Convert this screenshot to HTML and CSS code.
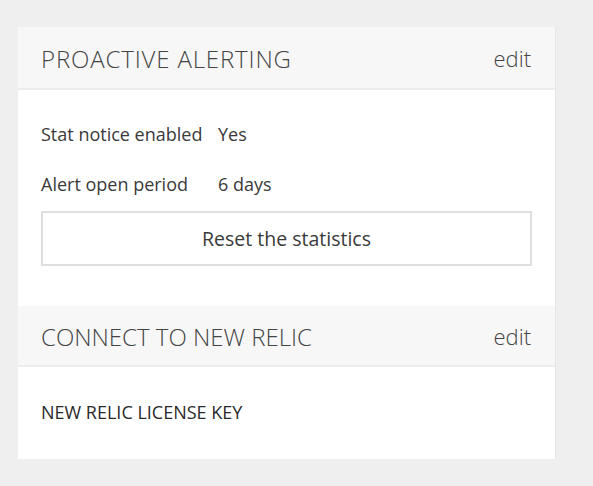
FILE: index.html
```html
<!DOCTYPE html>
<html>
<head>
<meta charset="utf-8">
<link rel="stylesheet" href="styles.css">
</head>
<body>
<div class="page">
  <div class="card">
    <section class="panel">
      <header class="panel-head">
        <h2 class="panel-title panel-title-wide">PROACTIVE ALERTING</h2>
        <a class="panel-edit">edit</a>
      </header>
      <div class="panel-body panel-body-first">
        <div class="field-row">
          <span class="field-label">Stat notice enabled</span>
          <span class="field-value">Yes</span>
        </div>
        <div class="field-row">
          <span class="field-label">Alert open period</span>
          <span class="field-value">6 days</span>
        </div>
        <button class="reset-btn">Reset the statistics</button>
      </div>
    </section>
    <section class="panel">
      <header class="panel-head panel-head-second">
        <h2 class="panel-title">CONNECT TO NEW RELIC</h2>
        <a class="panel-edit">edit</a>
      </header>
      <div class="panel-body panel-body-second">
        <div class="key-label">NEW RELIC LICENSE KEY</div>
      </div>
    </section>
  </div>
</div>
</body>
</html>
```
FILE: styles.css
```css
html, body {
  margin: 0;
  padding: 0;
  background: #efefef;
  font-family: "Open Sans", "Liberation Sans", sans-serif;
  color: #333;
}
.page {
  padding: 27px 38px 27px 18px;
}
.card {
  width: 537px;
  background: #fff;
  box-shadow: 1px 0 0 #e6e6e6;
}
.panel-head {
  display: flex;
  justify-content: space-between;
  align-items: center;
  height: 60px;
  padding: 1px 24px 0 23px;
  box-sizing: content-box;
  background: #f7f7f7;
  border-bottom: 2px solid #ececec;
}
.panel-head-second {
  height: 58px;
}
.panel-title {
  margin: 0;
  font-size: 24px;
  font-weight: 300;
  color: #444;
}
.panel-title-wide {
  letter-spacing: 0.85px;
}
.panel-edit {
  font-size: 22px;
  font-weight: 300;
  color: #444;
}
.panel-body {
  padding: 0 23px;
}
.panel-body-first {
  padding-top: 32px;
  padding-bottom: 40px;
}
.field-row {
  display: flex;
  font-size: 18px;
  line-height: 24px;
  margin-bottom: 26px;
  color: #3a3a3a;
}
.field-row:nth-child(2) {
  margin-bottom: 15px;
}
.field-label {
  width: 177px;
}
.reset-btn {
  display: block;
  width: 100%;
  height: 55px;
  background: #fff;
  border: 2px solid #dedede;
  font-family: inherit;
  font-size: 19.5px;
  color: #3a3a3a;
  padding: 0;
}
.panel-body-second {
  padding-top: 33px;
  padding-bottom: 35px;
}
.key-label {
  font-size: 18px;
  line-height: 24px;
  color: #2a2a2a;
}
```
